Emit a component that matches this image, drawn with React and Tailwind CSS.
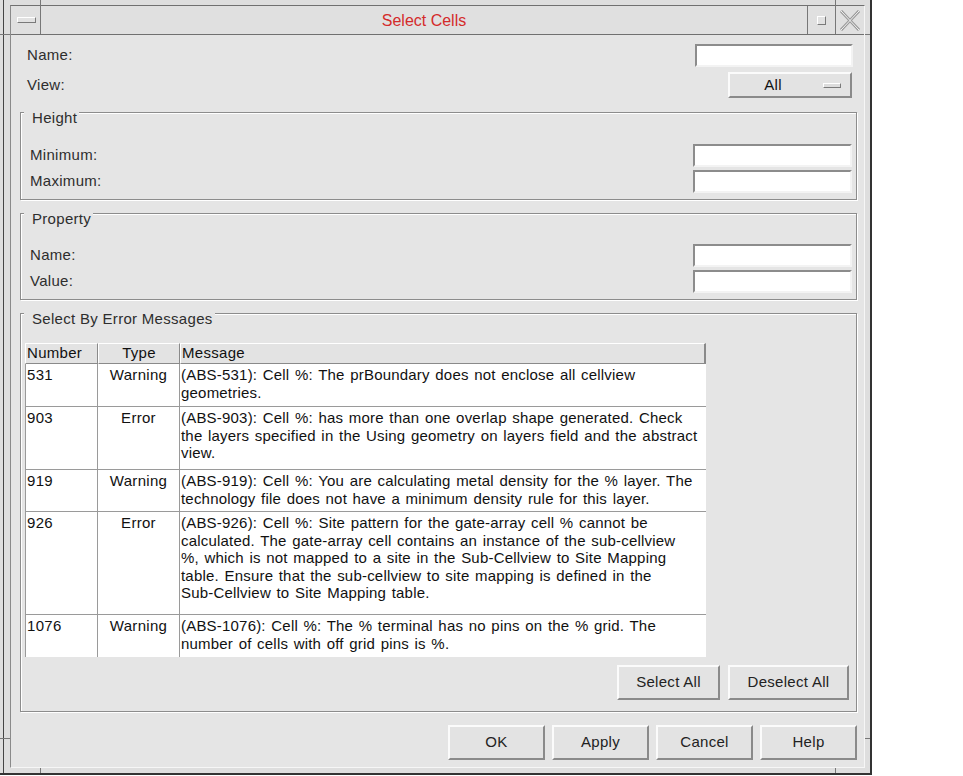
const rows = [
  {
    n: "531",
    t: "Warning",
    h: "h-[43px]",
    m: ["(ABS-531): Cell %: The prBoundary does not enclose all cellview", "geometries."],
  },
  {
    n: "903",
    t: "Error",
    h: "h-[63px]",
    m: [
      "(ABS-903): Cell %: has more than one overlap shape generated. Check",
      "the layers specified in the Using geometry on layers field and the abstract",
      "view.",
    ],
  },
  {
    n: "919",
    t: "Warning",
    h: "h-[42px]",
    m: [
      "(ABS-919): Cell %: You are calculating metal density for the % layer. The",
      "technology file does not have a minimum density rule for this layer.",
    ],
  },
  {
    n: "926",
    t: "Error",
    h: "h-[103px]",
    m: [
      "(ABS-926): Cell %: Site pattern for the gate-array cell % cannot be",
      "calculated. The gate-array cell contains an instance of the sub-cellview",
      "%, which is not mapped to a site in the Sub-Cellview to Site Mapping",
      "table. Ensure that the sub-cellview to site mapping is defined in the",
      "Sub-Cellview to Site Mapping table.",
    ],
  },
  {
    n: "1076",
    t: "Warning",
    h: "h-[42px]",
    m: [
      "(ABS-1076): Cell %: The % terminal has no pins on the % grid. The",
      "number of cells with off grid pins is %.",
    ],
  },
];

function Field() {
  return (
    <div className="h-[23px] w-[159px] border-2 border-t-[#8c8c8c] border-l-[#8c8c8c] border-b-[#f3f3f3] border-r-[#f3f3f3] bg-white" />
  );
}

function Btn({ className, children }) {
  return (
    <button
      className={`flex h-[35px] items-center justify-center border-2 border-t-[#fbfbfb] border-l-[#fbfbfb] border-b-[#8a8a8a] border-r-[#8a8a8a] bg-[#e3e3e3] text-[#222] ${className}`}
    >
      {children}
    </button>
  );
}

function Group({ title, className, children }) {
  return (
    <div
      className={`relative border border-[#8c8c8c] shadow-[inset_1px_1px_0_#fff,1px_1px_0_#fff] ${className}`}
    >
      <span className="absolute left-[3px] top-[-3px] bg-[#e5e5e5] pl-[8px] pr-[2px] leading-[16px]">
        {title}
      </span>
      {children}
    </div>
  );
}

function LabeledField({ label }) {
  return (
    <div className="flex h-[23px] items-center justify-between pl-[9px] pr-[4px]">
      <span>{label}</span>
      <Field />
    </div>
  );
}

export default function App() {
  return (
    <div className="flex h-[776px] w-[963px] bg-white font-['Liberation_Sans',Arial,sans-serif] text-[15px] tracking-[0.3px] text-[#2e2e2e]">
      <div className="relative h-[775px] w-[872px] border-r-2 border-b-2 border-[#333] bg-[#dedede] pl-[3px]">
        {/* frame corner marks */}
        <div className="absolute left-[40px] top-0 h-[6px] w-px bg-[#777]" />
        <div className="absolute left-[835px] top-0 h-[6px] w-px bg-[#777]" />
        <div className="absolute left-[40px] top-[768px] h-[5px] w-px bg-[#777]" />
        <div className="absolute left-[835px] top-[768px] h-[5px] w-px bg-[#777]" />
        <div className="absolute left-0 top-[34px] h-px w-[10px] bg-[#777]" />
        <div className="absolute left-[865px] top-[34px] h-px w-[5px] bg-[#777]" />
        <div className="absolute left-0 top-[738px] h-px w-[10px] bg-[#777]" />
        <div className="absolute left-[865px] top-[738px] h-px w-[5px] bg-[#777]" />

        <div className="flex h-full flex-col border-l border-[#444] pb-[5px] pl-[6px] pr-[5px] pt-[5px]">
          <div className="flex flex-1 flex-col border border-t-[#707070] border-l-[#8a8a8a] border-b-[#f6f6f6] border-r-[#f6f6f6]">
            {/* Title bar */}
            <div className="flex h-[29px] border-b border-[#707070] bg-[#e0e0e0]">
              <div className="flex w-[30px] items-start border-r border-[#777] pl-[6px] pt-[11px]">
                <div className="h-[6px] w-[19px] border border-t-white border-l-white border-b-[#7a7a7a] border-r-[#7a7a7a] bg-[#e2e2e2]" />
              </div>
              <div className="flex flex-1 items-center justify-center pt-[2px] text-[16px] tracking-normal text-[#d42b2b]">
                Select Cells
              </div>
              <div className="flex w-[28px] items-start border-l border-[#777] pl-[9px] pt-[10px]">
                <div className="h-[9px] w-[9px] border border-t-white border-l-white border-b-[#7a7a7a] border-r-[#7a7a7a] bg-[#e2e2e2]" />
              </div>
              <div className="flex w-[29px] items-start border-l border-[#777] pl-[3px] pt-[4px]">
                <svg width="22" height="21" viewBox="0 0 22 21">
                  <path d="M2 1 L20 20 M20 1 L2 20" stroke="#9a9a9a" strokeWidth="3" fill="none" />
                  <path d="M2 1 L20 20 M20 1 L2 20" stroke="#f4f4f4" strokeWidth="1" fill="none" />
                </svg>
              </div>
            </div>

            {/* Body */}
            <div className="flex flex-1 flex-col bg-[#e5e5e5] pl-[9px] pr-[7px]">
              <div className="mt-[9px] flex h-[23px] items-center justify-between pl-[7px] pr-[4px]">
                <span>Name:</span>
                <div className="h-[23px] w-[158px] border-2 border-t-[#8c8c8c] border-l-[#8c8c8c] border-b-[#f3f3f3] border-r-[#f3f3f3] bg-white" />
              </div>
              <div className="mt-[5px] flex h-[26px] items-center justify-between pl-[7px] pr-[5px]">
                <span>View:</span>
                <button className="flex h-[26px] w-[124px] items-center border-2 border-t-[#fbfbfb] border-l-[#fbfbfb] border-b-[#8a8a8a] border-r-[#8a8a8a] bg-[#e3e3e3] text-[#111]">
                  <span className="w-[86px] text-center">All</span>
                  <span className="ml-[7px] h-[5px] w-[18px] border border-t-white border-l-white border-b-[#7a7a7a] border-r-[#7a7a7a] bg-[#dcdcdc]" />
                </button>
              </div>

              <Group title="Height" className="mt-[14px] flex flex-col gap-[3px] pb-[6px] pt-[31px]">
                <LabeledField label="Minimum:" />
                <LabeledField label="Maximum:" />
              </Group>

              <Group title="Property" className="mt-[13px] flex flex-col gap-[3px] pb-[6px] pt-[30px]">
                <LabeledField label="Name:" />
                <LabeledField label="Value:" />
              </Group>

              <Group title="Select By Error Messages" className="mt-[13px] pb-[11px] pl-[4px] pr-[7px] pt-[29px]">
                <div className="w-[681px] text-[#111]">
                  <div className="flex h-[21px]">
                    <div className="flex w-[73px] items-center border border-t-white border-l-white border-b-[#8a8a8a] border-r-[#8a8a8a] bg-[#e3e3e3] pl-[1px]">
                      Number
                    </div>
                    <div className="flex w-[82px] items-center justify-center border border-t-white border-l-white border-b-[#8a8a8a] border-r-[#8a8a8a] bg-[#e3e3e3]">
                      Type
                    </div>
                    <div className="flex w-[526px] items-center border border-r-2 border-t-white border-l-white border-b-[#8a8a8a] border-r-[#8a8a8a] bg-[#e3e3e3] pl-[1px]">
                      Message
                    </div>
                  </div>
                  {rows.map((r, i) => (
                    <div
                      key={r.n}
                      className={`flex bg-white leading-[17.5px] ${r.h} ${
                        i < rows.length - 1 ? "border-b border-[#9a9a9a]" : ""
                      }`}
                    >
                      <div className="w-[73px] border-l border-r border-[#9a9a9a] pl-[1px] pt-[2px]">{r.n}</div>
                      <div className="w-[82px] border-r border-[#9a9a9a] pt-[2px] text-center">{r.t}</div>
                      <div className="w-[526px] pl-[1px] pt-[2px] tracking-[0.2px] [word-spacing:1.2px]">
                        {r.m.map((line) => (
                          <div key={line} className="whitespace-nowrap">
                            {line}
                          </div>
                        ))}
                      </div>
                    </div>
                  ))}
                </div>
                <div className="mt-[8px] flex justify-end gap-[8px]">
                  <Btn className="w-[103px]">Select All</Btn>
                  <Btn className="w-[121px]">Deselect All</Btn>
                </div>
              </Group>

              <div className="mt-[13px] flex justify-end gap-[7px]">
                <Btn className="w-[97px]">OK</Btn>
                <Btn className="w-[97px]">Apply</Btn>
                <Btn className="w-[97px]">Cancel</Btn>
                <Btn className="w-[97px]">Help</Btn>
              </div>
            </div>
          </div>
        </div>
      </div>
    </div>
  );
}
